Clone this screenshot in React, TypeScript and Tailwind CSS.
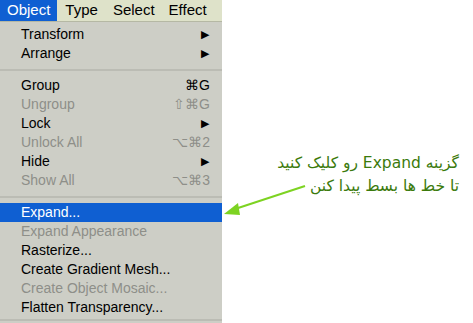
import { Fragment } from "react";

type Item = {
  label: string;
  shortcut?: string;
  submenu?: boolean;
  disabled?: boolean;
  active?: boolean;
};

const groups: Item[][] = [
  [
    { label: "Transform", submenu: true },
    { label: "Arrange", submenu: true },
  ],
  [
    { label: "Group", shortcut: "⌘G" },
    { label: "Ungroup", shortcut: "⇧⌘G", disabled: true },
    { label: "Lock", submenu: true },
    { label: "Unlock All", shortcut: "⌥⌘2", disabled: true },
    { label: "Hide", submenu: true },
    { label: "Show All", shortcut: "⌥⌘3", disabled: true },
  ],
  [
    { label: "Expand...", active: true },
    { label: "Expand Appearance", disabled: true },
    { label: "Rasterize..." },
    { label: "Create Gradient Mesh..." },
    { label: "Create Object Mosaic...", disabled: true },
    { label: "Flatten Transparency..." },
  ],
];

const Row = ({ item }: { item: Item }) => (
  <div
    className={`flex items-center justify-between h-[19px] pl-[21px] pr-[12px]
      ${item.active ? "bg-[#0f5fd2] text-white" : item.disabled ? "text-[#8e8f89]" : "text-black"}
    `}
  >
    <span>{item.label}</span>
    {item.submenu && <span className="text-[11px] pr-[1px]">▶</span>}
    {item.shortcut && <span>{item.shortcut}</span>}
  </div>
);

const Separator = () => (
  <div className="flex flex-col justify-center h-[13px]">
    <div className="h-[2px] bg-[#bbbcb4]" />
  </div>
);

export default function App() {
  return (
    <div className="relative flex w-[473px] h-[323px] bg-white overflow-hidden font-['Liberation_Sans',Arial,sans-serif] text-[14px]">
      <div className="flex flex-col w-[222px] bg-[#cdcec6]">
        <div className="flex items-center h-[22px] bg-[#dee2c9] border-b border-[#b5b8a4] text-[15px] whitespace-nowrap">
          <span className="flex items-center h-full px-[7px] bg-[#0f5fd2] text-white">Object</span>
          <span className="pl-[8px]">Type</span>
          <span className="pl-[15px]">Select</span>
          <span className="pl-[14px]">Effect</span>
        </div>
        <div className="pt-[3px]">
          {groups.map((group, i) => (
            <Fragment key={i}>
              {i > 0 && <Separator />}
              {group.map((item) => (
                <Row key={item.label} item={item} />
              ))}
            </Fragment>
          ))}
          <div className="mt-[2px] h-[2px] bg-[#bbbcb4]" />
        </div>
      </div>

      <div
        dir="rtl"
        className="flex flex-col items-start pt-[152px] pr-[14px] flex-1 text-[15.5px] leading-[23px] text-[#3b7a0c] font-['DejaVu_Sans',sans-serif]"
      >
        <span>گزینه Expand رو کلیک کنید</span>
        <span>تا خط ها بسط پیدا کنن</span>
      </div>

      <svg className="absolute left-0 top-0" width="473" height="323">
        <line x1="305" y1="186" x2="232" y2="210" stroke="#7dd322" strokeWidth="2" />
        <polygon points="224,214 238,203 240,215" fill="#7dd322" />
      </svg>
    </div>
  );
}
